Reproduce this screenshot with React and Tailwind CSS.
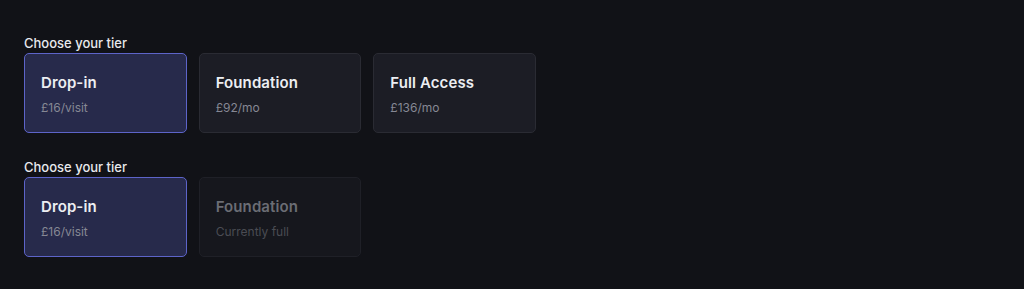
export default function App() {
  const font = { fontFamily: '"Inter", "Noto Sans", sans-serif' };
  const Card = ({ title, sub, selected, disabled }) => (
    <div
      className={
        "h-[80px] rounded-[5px] border pl-4 pt-[19px] flex flex-col gap-[7px] " +
        (selected
          ? "bg-[#272a4b] border-[#5d64c9]"
          : disabled
          ? "bg-[#16171d] border-[#1f2027]"
          : "bg-[#1c1d25] border-[#2a2b33]")
      }
    >
      <div
        className={
          "text-[15px] leading-5 font-semibold tracking-[0.1px] " +
          (disabled ? "text-[#6b6d74]" : "text-[#eceef2]")
        }
      >
        {title}
      </div>
      <div
        className={
          "text-[12px] leading-4 " +
          (disabled ? "text-[#4a4c53]" : "text-[#868894]")
        }
      >
        {sub}
      </div>
    </div>
  );
  return (
    <div className="w-[1024px] h-[289px] bg-[#111217] px-6 pt-[35px]" style={font}>
      <div className="flex flex-col gap-[26px] w-[512px]">
        <div>
          <div className="text-[13px] leading-4 font-medium text-[#e8e9ed] mb-[2px]">Choose your tier</div>
          <div className="grid grid-cols-3 gap-3">
            <Card title="Drop-in" sub="£16/visit" selected />
            <Card title="Foundation" sub="£92/mo" />
            <Card title="Full Access" sub="£136/mo" />
          </div>
        </div>
        <div>
          <div className="text-[13px] leading-4 font-medium text-[#e8e9ed] mb-[2px]">Choose your tier</div>
          <div className="grid grid-cols-3 gap-3">
            <Card title="Drop-in" sub="£16/visit" selected />
            <Card title="Foundation" sub="Currently full" disabled />
          </div>
        </div>
      </div>
    </div>
  );
}
